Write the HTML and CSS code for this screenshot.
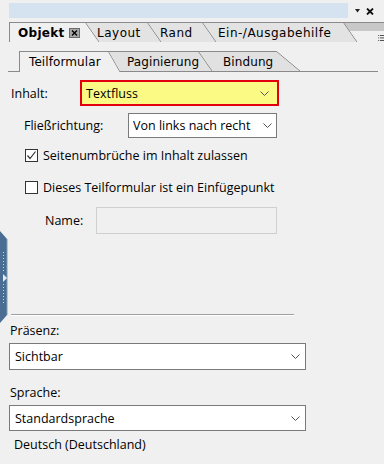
FILE: index.html
```html
<!DOCTYPE html>
<html lang="de">
<head>
<meta charset="utf-8">
<title>Objekt</title>
<link rel="stylesheet" href="styles.css">
</head>
<body>
<div class="panel">
  <div class="titlebar">
    <div class="title-fill"></div>
    <div class="title-ctrl">
      <svg class="ctrl-tri" width="5" height="4" viewBox="0 0 5 4"><path d="M0 0H5L2.5 3.5Z" fill="#222"/></svg>
      <svg class="ctrl-x" width="8" height="7" viewBox="0 0 8 7"><path d="M1 0.5L7 6.5M7 0.5L1 6.5" stroke="#111" stroke-width="1.8"/></svg>
    </div>
  </div>

  <div class="maintabs">
    <div class="tab mtab active m1"><span class="tab-bold">Objekt</span><span class="xbox"><svg width="7" height="6" viewBox="0 0 7 6"><path d="M1 0.5L6 5.5M6 0.5L1 5.5" stroke="#000" stroke-width="1.4"/></svg></span></div>
    <div class="tab mtab m2">Layout</div>
    <div class="tab mtab m3">Rand</div>
    <div class="tab mtab m4">Ein-/Ausgabehilfe</div>
    <div class="tab-filler">
      <div class="filler-bar"></div>
      <svg class="menu-icon" width="14" height="8" viewBox="0 0 14 8">
        <rect x="0" y="0" width="1" height="1" fill="#333"/>
        <rect x="2" y="0" width="6" height="1" fill="#333"/>
        <rect x="0" y="3" width="1" height="1" fill="#333"/>
        <rect x="2" y="3" width="6" height="1" fill="#333"/>
        <rect x="0" y="6" width="1" height="1" fill="#333"/>
        <rect x="2" y="6" width="6" height="1" fill="#333"/>
        <path d="M13 3V7H9Z" fill="#333"/>
      </svg>
    </div>
  </div>

  <div class="subtabs">
    <div class="tab stab active s1">Teilformular</div>
    <div class="tab stab s2">Paginierung</div>
    <div class="tab stab s3">Bindung</div>
  </div>

  <div class="content">
    <div class="row row-inhalt">
      <span class="label lbl-inhalt">Inhalt:</span>
      <div class="select sel-inhalt">
        <span class="sel-text">Textfluss</span>
        <svg class="chev" width="9" height="5" viewBox="0 0 9 5"><path d="M0.5 0.5L4.5 4.5L8.5 0.5" fill="none" stroke="#555" stroke-width="1"/></svg>
      </div>
    </div>

    <div class="row row-fliess">
      <span class="label lbl-fliess">Fließrichtung:</span>
      <div class="select sel-fliess">
        <span class="sel-text clip">Von links nach recht</span>
        <svg class="chev" width="9" height="5" viewBox="0 0 9 5"><path d="M0.5 0.5L4.5 4.5L8.5 0.5" fill="none" stroke="#555" stroke-width="1"/></svg>
      </div>
    </div>

    <div class="row check-row cr1">
      <span class="checkbox checked"><svg width="11" height="11" viewBox="0 0 11 11"><path d="M1.5 5.5L4 8.5L9.5 1.5" fill="none" stroke="#333" stroke-width="1.2"/></svg></span>
      <span class="check-label">Seitenumbrüche im Inhalt zulassen</span>
    </div>

    <div class="row check-row cr2">
      <span class="checkbox"></span>
      <span class="check-label">Dieses Teilformular ist ein Einfügepunkt</span>
    </div>

    <div class="row row-name">
      <span class="label lbl-name">Name:</span>
      <div class="input-disabled"></div>
    </div>

    <div class="separator"></div>

    <div class="field-label lbl-praesenz">Präsenz:</div>
    <div class="select sel-wide sel-praesenz">
      <span class="sel-text">Sichtbar</span>
      <svg class="chev" width="9" height="5" viewBox="0 0 9 5"><path d="M0.5 0.5L4.5 4.5L8.5 0.5" fill="none" stroke="#555" stroke-width="1"/></svg>
    </div>

    <div class="field-label lbl-sprache">Sprache:</div>
    <div class="select sel-wide sel-sprache">
      <span class="sel-text">Standardsprache</span>
      <svg class="chev" width="9" height="5" viewBox="0 0 9 5"><path d="M0.5 0.5L4.5 4.5L8.5 0.5" fill="none" stroke="#555" stroke-width="1"/></svg>
    </div>

    <div class="note">Deutsch (Deutschland)</div>
  </div>

  <div class="side-grip">
    <svg width="8" height="92" viewBox="0 0 8 92">
      <path d="M0 0L7 8V84L0 92Z" fill="#4a6e93"/>
      <path d="M7 8V84" stroke="#7d9ab6" stroke-width="1"/>
      <g fill="#c9d6e3">
        <rect x="3" y="21" width="1" height="1"/><rect x="3" y="24" width="1" height="1"/>
        <rect x="3" y="27" width="1" height="1"/><rect x="3" y="30" width="1" height="1"/>
        <rect x="3" y="33" width="1" height="1"/><rect x="3" y="36" width="1" height="1"/>
        <rect x="3" y="39" width="1" height="1"/>
        <rect x="3" y="53" width="1" height="1"/><rect x="3" y="56" width="1" height="1"/>
        <rect x="3" y="59" width="1" height="1"/><rect x="3" y="62" width="1" height="1"/>
        <rect x="3" y="65" width="1" height="1"/><rect x="3" y="68" width="1" height="1"/>
        <rect x="3" y="71" width="1" height="1"/>
      </g>
      <path d="M3 43L7 47L3 51Z" fill="#e6ecf2"/>
    </svg>
  </div>
</div>
</body>
</html>
```

FILE: styles.css
```css
html, body {
  margin: 0;
  padding: 0;
}

body {
  width: 384px;
  height: 464px;
  overflow: hidden;
  background: #f0f0f0;
  font-family: "Open Sans", "Noto Sans", "DejaVu Sans", sans-serif;
  font-size: 12.5px;
  color: #000;
}

.panel {
  position: relative;
  width: 384px;
  height: 464px;
  display: flex;
  flex-direction: column;
}

/* title bar */
.titlebar {
  display: flex;
  margin: 3px 0 0 9px;
  height: 15px;
}

.title-fill {
  width: 339px;
  background: #d5e3f1;
}

.title-ctrl {
  display: flex;
  align-items: center;
  gap: 6px;
  padding-left: 7px;
}

.ctrl-x {
  margin-top: 1px;
}

/* tabs common */
.tab {
  --s: 14px;
  --fill: #e3e3e3;
  position: relative;
  box-sizing: border-box;
  display: flex;
  align-items: center;
  flex: none;
  margin-right: calc(-1 * var(--s));
  padding-top: 2px;
  white-space: nowrap;
  font-family: "DejaVu Sans", Verdana, sans-serif;
  font-size: 12px;
  color: #000;
  background:
    linear-gradient(to bottom left, transparent calc(50% - 0.7px), #8a8a8a 50%, var(--fill) calc(50% + 0.7px)) no-repeat right top / var(--s) 100%,
    linear-gradient(#8a8a8a, #8a8a8a) no-repeat left top / calc(100% - var(--s)) 1px,
    linear-gradient(var(--fill), var(--fill)) no-repeat left top / calc(100% - var(--s)) 100%;
}

.tab.active {
  --fill: #f0f0f0;
  z-index: 10;
}

.tab.active::before {
  content: "";
  position: absolute;
  left: 0;
  top: 0;
  bottom: 0;
  width: 1px;
  background: #8a8a8a;
}

/* main tabs */
.maintabs {
  display: flex;
  margin: 4px 0 0 9px;
  height: 20px;
}

.mtab {
  height: 20px;
  letter-spacing: 0.5px;
}

.m1 { width: 90px; padding-left: 9px; z-index: 10; }
.m2 { width: 76px; padding-left: 12px; z-index: 4; }
.m3 { width: 69px; padding-left: 13px; z-index: 3; }
.m4 { width: 155px; padding-left: 16px; z-index: 2; }

.tab-bold {
  font-weight: bold;
  letter-spacing: 0.3px;
}

.xbox {
  display: inline-flex;
  align-items: center;
  justify-content: center;
  width: 9px;
  height: 8px;
  margin-left: 4px;
  background: #a9a9a9;
  border: 1px solid #6a6a6a;
}

.tab-filler {
  position: relative;
  z-index: 0;
  display: flex;
  flex-direction: column;
  align-items: flex-end;
  width: 51px;
  flex: none;
}

.filler-bar {
  align-self: stretch;
  height: 10px;
  border-top: 1px solid #8a8a8a;
  background: #c8c8c8;
}

.menu-icon {
  margin: 4px 3px 0 0;
}

/* sub tabs */
.subtabs {
  display: flex;
  margin: 9px 0 0 8px;
  width: 370px;
  padding-left: 11px;
  box-sizing: border-box;
  height: 21px;
  border-bottom: 1px solid #8a8a8a;
}

.stab {
  height: 20px;
  --fill: #e1e1e1;
  letter-spacing: 0.1px;
}

.stab.active {
  --fill: #f0f0f0;
  height: 21px;
  margin-bottom: -1px;
  padding-bottom: 1px;
}

.s1 { width: 101px; padding-left: 10px; --s: 12px; z-index: 10; }
.s2 { width: 104px; padding-left: 19px; --s: 14px; z-index: 3; }
.s3 { width: 102px; padding-left: 25px; --s: 24px; z-index: 2; }

/* form content */
.content {
  display: flex;
  flex-direction: column;
  align-items: flex-start;
}

.row {
  display: flex;
  align-items: center;
}

.label {
  flex: none;
}

.select {
  display: flex;
  align-items: center;
  justify-content: space-between;
  box-sizing: border-box;
  background: #fff;
  border: 1px solid #7a7a7a;
  flex: none;
}

.sel-text {
  white-space: nowrap;
}

.chev {
  flex: none;
}

.row-inhalt {
  margin-top: 8px;
  height: 26px;
}

.lbl-inhalt {
  width: 69px;
  padding-left: 11px;
}

.sel-inhalt {
  width: 199px;
  height: 26px;
  background: #fbfa84;
  border: 2px solid #e2000f;
  padding: 0 8px 0 4px;
}

.row-fliess {
  margin-top: 7px;
  height: 25px;
}

.lbl-fliess {
  width: 104px;
  padding-left: 24px;
}

.sel-fliess {
  width: 149px;
  height: 25px;
  padding: 0 4px 0 4px;
}

.clip {
  width: 124px;
  overflow: hidden;
}

.check-row {
  height: 20px;
  padding-left: 25px;
}

.cr1 { margin-top: 7px; }
.cr2 { margin-top: 12px; }

.checkbox {
  display: inline-flex;
  align-items: center;
  justify-content: center;
  box-sizing: border-box;
  width: 13px;
  height: 13px;
  border: 1px solid #333;
  background: #fff;
  flex: none;
}

.check-label {
  margin-left: 5px;
}

.row-name {
  margin-top: 10px;
  height: 27px;
}

.lbl-name {
  width: 51px;
  padding-left: 45px;
}

.input-disabled {
  width: 181px;
  height: 27px;
  box-sizing: border-box;
  border: 1px solid #cfcfcf;
  background: #f0f0f0;
}

.separator {
  margin: 80px 0 0 11px;
  width: 283px;
  height: 0;
  border-top: 1px solid #a0a0a0;
  border-bottom: 1px solid #ffffff;
}

.field-label {
  padding-left: 10px;
  line-height: 16px;
}

.lbl-praesenz { margin-top: 7px; }
.lbl-sprache { margin-top: 15px; }

.sel-wide {
  margin: 4px 0 0 9px;
  width: 297px;
  padding: 0 5px 0 5px;
}

.sel-praesenz { height: 27px; }
.sel-sprache { height: 26px; }

.note {
  margin: 6px 0 0 14px;
  line-height: 16px;
}

/* left docking grip overlay */
.side-grip {
  position: absolute;
  left: 0;
  top: 231px;
  width: 8px;
  height: 92px;
}

.side-grip svg {
  display: block;
}
```
